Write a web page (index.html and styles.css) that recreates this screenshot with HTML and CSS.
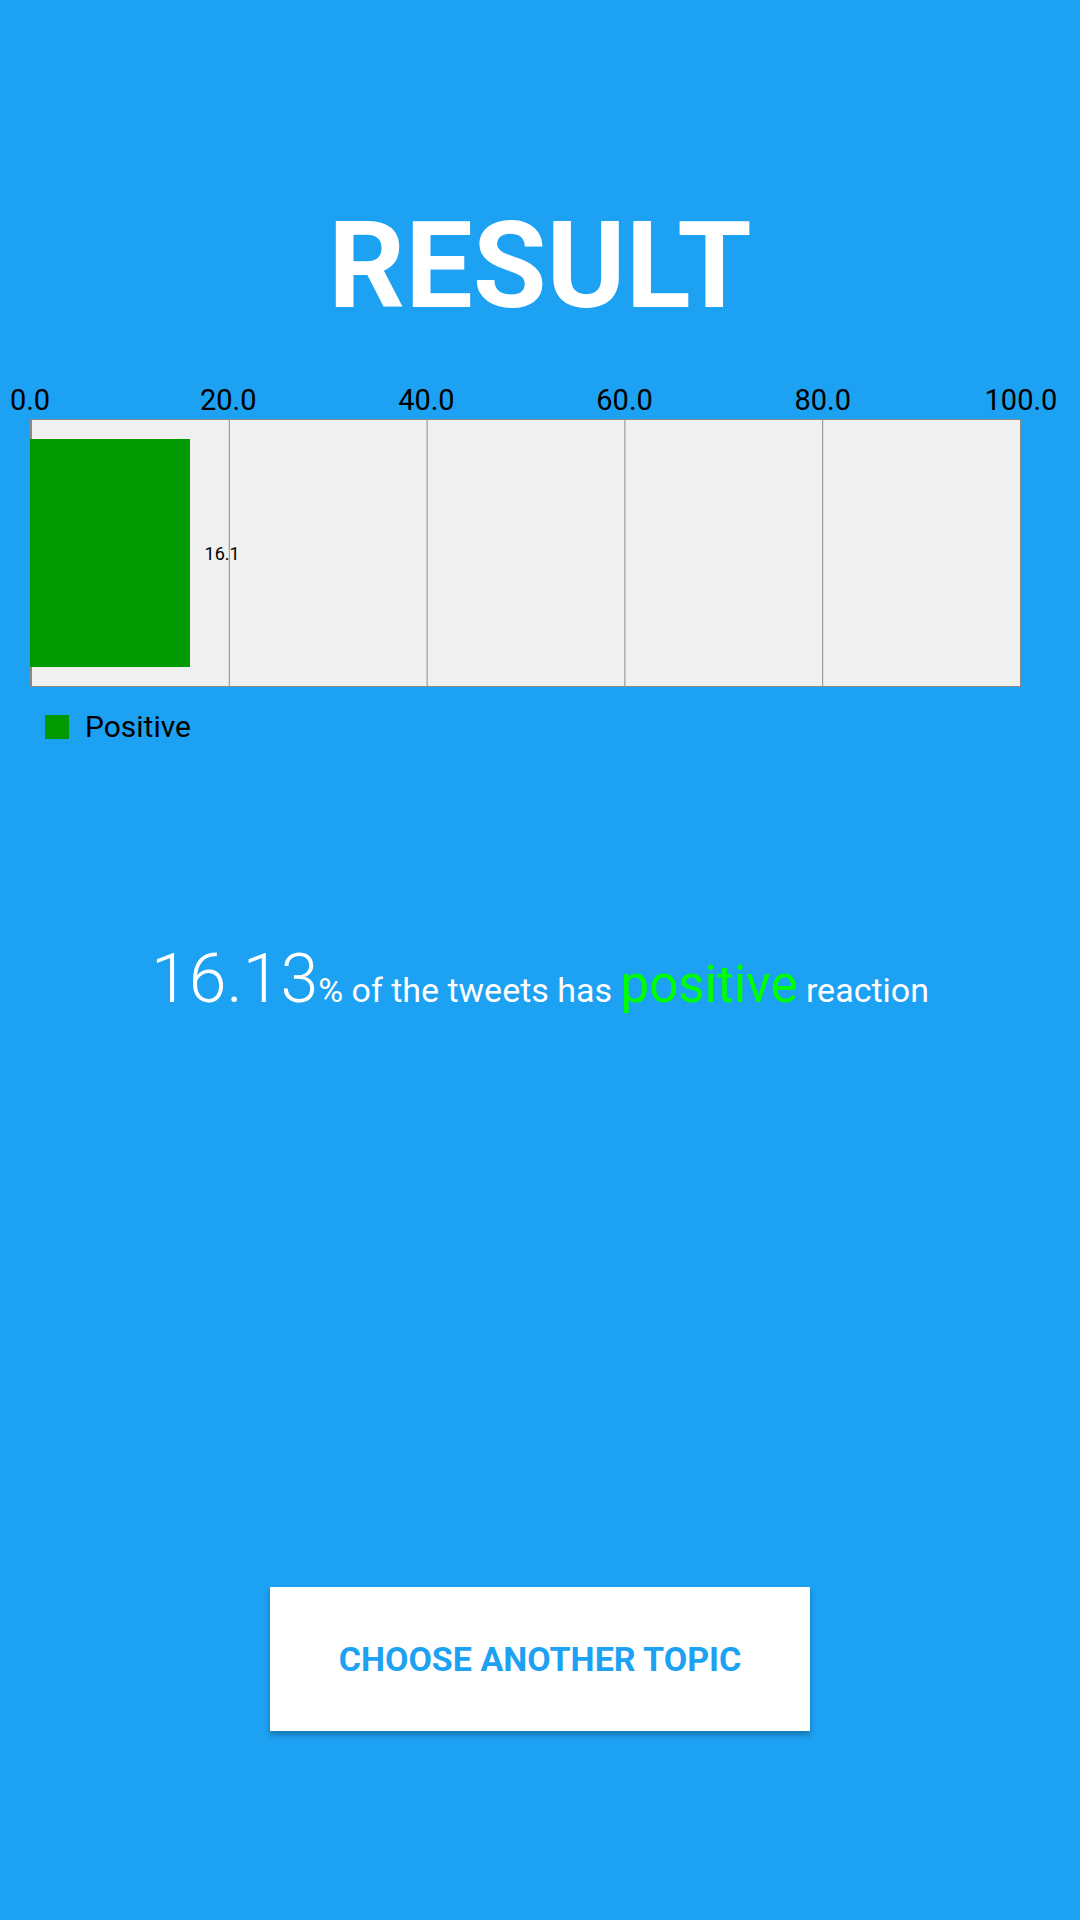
FILE: index.html
```html
<!DOCTYPE html>
<html lang="en">
<head>
<meta charset="utf-8">
<title>Result</title>
<link rel="stylesheet" href="styles.css">
</head>
<body>
<main class="screen">
  <h1 class="title">RESULT</h1>

  <section class="chart">
    <div class="axis">
      <span class="tick">0.0</span>
      <span class="tick">20.0</span>
      <span class="tick">40.0</span>
      <span class="tick">60.0</span>
      <span class="tick">80.0</span>
      <span class="tick">100.0</span>
    </div>
    <div class="plot">
      <div class="bar" style="width: 16.13%"></div>
      <span class="bar-label">16.1</span>
    </div>
    <div class="legend">
      <span class="legend-swatch"></span>
      <span class="legend-text">Positive</span>
    </div>
  </section>

  <p class="summary"><span class="num">16.13</span>% of the tweets has <span class="pos">positive</span> reaction</p>

  <button class="action" type="button">CHOOSE ANOTHER TOPIC</button>
</main>
</body>
</html>
```
FILE: styles.css
```css
html, body {
  margin: 0;
  padding: 0;
  overflow: hidden;
}

body {
  background: #1DA1F2;
  font-family: Roboto, "Noto Sans", "Liberation Sans", sans-serif;
  width: 1080px;
  height: 1920px;
}

.screen {
  display: flex;
  flex-direction: column;
  width: 1080px;
  height: 1920px;
}

.title {
  margin: 206px 0 0;
  font-size: 120px;
  line-height: 120px;
  font-weight: 700;
  color: #ffffff;
  text-align: center;
}

.chart {
  margin: 60px 59px 0 30px;
  display: flex;
  flex-direction: column;
}

.axis {
  display: grid;
  grid-template-columns: repeat(6, 1fr);
  margin: 0 -10%;
  font-size: 29px;
  line-height: 28px;
  color: #000000;
}

.tick {
  text-align: center;
}

.plot {
  margin-top: 5px;
  height: 228px;
  padding: 19px 0;
  border: 1px solid #8a8a8a;
  background-color: #f0f0f0;
  background-image: linear-gradient(to right, #8a8a8a 1px, transparent 1px);
  background-size: 20% 100%;
  background-position: 0 0;
  display: flex;
  align-items: center;
}

.bar {
  align-self: stretch;
  background: #009900;
  margin-left: -1px;
}

.bar-label {
  margin-left: 15px;
  font-size: 18px;
  color: #000000;
}

.legend {
  margin-top: 25px;
  padding-left: 15px;
  display: flex;
  align-items: center;
  gap: 16px;
  height: 29px;
}

.legend-swatch {
  width: 24px;
  height: 24px;
  background: #009900;
}

.legend-text {
  font-size: 30px;
  line-height: 29px;
  color: #000000;
}

.summary {
  margin: 204px 0 0;
  text-align: center;
  font-size: 34px;
  line-height: 34px;
  color: #ffffff;
}

.num {
  font-size: 68px;
  line-height: 68px;
  font-weight: 300;
}

.pos {
  font-size: 51px;
  line-height: 50px;
  font-weight: 400;
  color: #00ff00;
}

.action {
  align-self: center;
  margin-top: 574px;
  width: 540px;
  height: 144px;
  border: none;
  border-radius: 0;
  background: #ffffff;
  box-shadow: 0 4px 6px rgba(0, 0, 0, 0.28);
  font-family: Roboto, "Noto Sans", "Liberation Sans", sans-serif;
  font-size: 34px;
  font-weight: 700;
  color: #1DA1F2;
  padding: 0;
}
```
